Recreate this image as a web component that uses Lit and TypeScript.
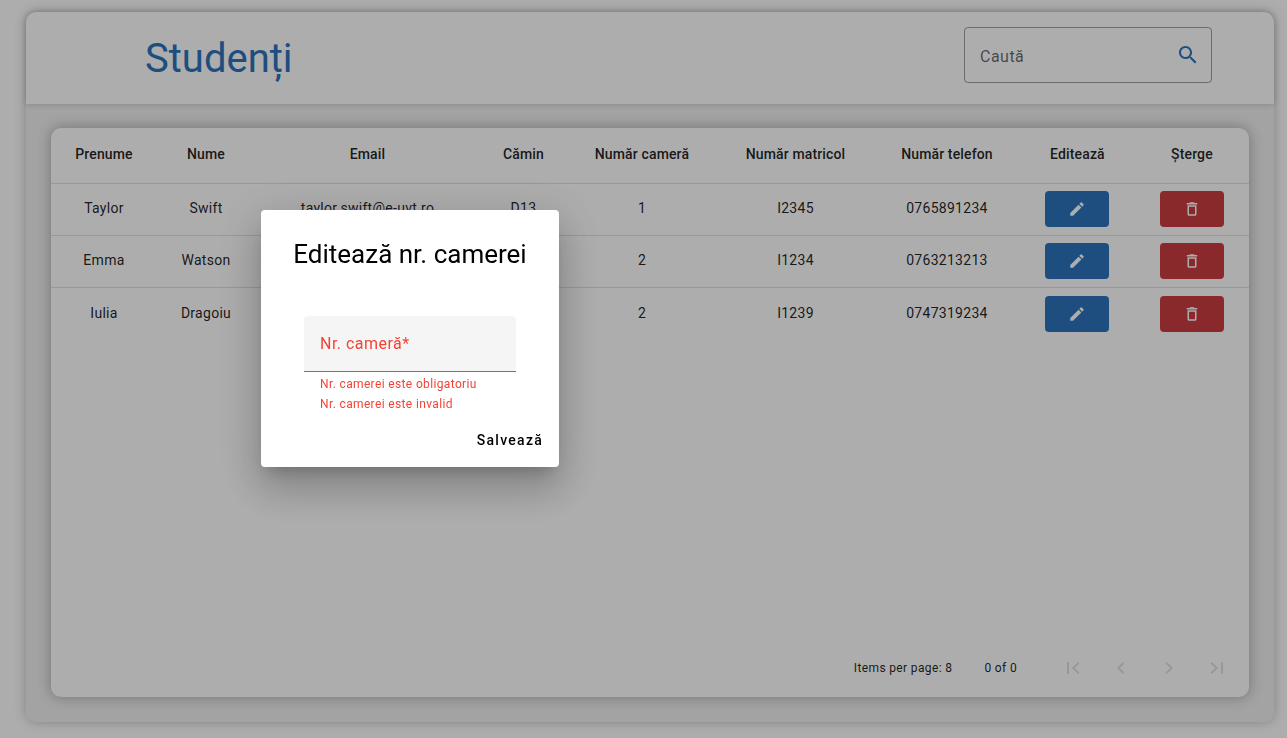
import { LitElement, html, css, svg } from "lit";
import { customElement, state } from "lit/decorators.js";

interface Student {
  firstName: string;
  lastName: string;
  email: string;
  dorm: string;
  room: string;
  matricol: string;
  phone: string;
}

const STUDENTS: Student[] = [
  { firstName: "Taylor", lastName: "Swift", email: "taylor.swift@e-uvt.ro", dorm: "D13", room: "1", matricol: "I2345", phone: "0765891234" },
  { firstName: "Emma", lastName: "Watson", email: "", dorm: "", room: "2", matricol: "I1234", phone: "0763213213" },
  { firstName: "Iulia", lastName: "Dragoiu", email: "", dorm: "", room: "2", matricol: "I1239", phone: "0747319234" },
];

// Column titles with their relative widths.
const COLUMNS: { title: string; weight: number }[] = [
  { title: "Prenume", weight: 106 },
  { title: "Nume", weight: 98 },
  { title: "Email", weight: 225 },
  { title: "Cămin", weight: 87 },
  { title: "Număr cameră", weight: 150 },
  { title: "Număr matricol", weight: 157 },
  { title: "Număr telefon", weight: 146 },
  { title: "Editează", weight: 115 },
  { title: "Șterge", weight: 114 },
];
const TOTAL_WEIGHT = COLUMNS.reduce((sum, c) => sum + c.weight, 0);

const ICONS = {
  search:
    "M15.5 14h-.79l-.28-.27C15.41 12.59 16 11.11 16 9.5 16 5.91 13.09 3 9.5 3S3 5.91 3 9.5 5.91 16 9.5 16c1.61 0 3.09-.59 4.23-1.57l.27.28v.79l5 4.99L20.49 19l-4.99-5zm-6 0C7.01 14 5 11.99 5 9.5S7.01 5 9.5 5 14 7.01 14 9.5 11.99 14 9.5 14z",
  edit:
    "M3 17.25V21h3.75L17.81 9.94l-3.75-3.75L3 17.25zM20.71 7.04c.39-.39.39-1.02 0-1.41l-2.34-2.34c-.39-.39-1.02-.39-1.41 0l-1.83 1.83 3.75 3.75 1.83-1.83z",
  trash:
    "M6 19c0 1.1.9 2 2 2h8c1.1 0 2-.9 2-2V7H6v12zM8 9h8v10H8V9zm7.5-5l-1-1h-5l-1 1H5v2h14V4z",
  first: "M18.41 16.59L13.82 12l4.59-4.59L17 6l-6 6 6 6zM6 6h2v12H6z",
  prev: "M15.41 7.41L14 6l-6 6 6 6 1.41-1.41L10.83 12z",
  next: "M10 6L8.59 7.41 13.17 12l-4.58 4.59L10 18l6-6z",
  last: "M5.59 7.41L10.18 12l-4.59 4.59L7 18l6-6-6-6zM16 6h2v12h-2z",
};

const icon = (name: keyof typeof ICONS, size: number) => html`
  <svg width=${size} height=${size} viewBox="0 0 24 24" fill="currentColor" aria-hidden="true">
    ${svg`<path d=${ICONS[name]}></path>`}
  </svg>
`;

@customElement("students-table")
class StudentsTable extends LitElement {
  static styles = css`
    :host {
      display: flex;
      flex-direction: column;
      justify-content: space-between;
      flex: 1;
      background: #fff;
      border-radius: 10px;
      box-shadow: 0 0 14px rgba(0, 0, 0, 0.3);
    }
    .table {
      width: 100%;
      table-layout: fixed;
      border-collapse: separate;
      border-spacing: 0;
      font-size: 14px;
      line-height: 20px;
      text-align: center;
      color: rgba(0, 0, 0, 0.87);
    }
    .head {
      height: 56px;
      padding: 0 0 4px;
      font-weight: 500;
      letter-spacing: 0.01em;
      border-bottom: 1px solid rgba(0, 0, 0, 0.12);
      box-sizing: border-box;
    }
    .cell {
      height: 52px;
      padding: 0 0 1px;
      box-sizing: border-box;
      letter-spacing: 0.02em;
      border-bottom: 1px solid rgba(0, 0, 0, 0.12);
    }
    .text {
      padding-bottom: 3px;
    }
    .row:last-child .cell {
      padding-top: 1px;
      border-bottom: none;
    }
    .action {
      display: inline-flex;
      align-items: center;
      justify-content: center;
      width: 64px;
      height: 36px;
      padding: 0;
      border: none;
      border-radius: 4px;
      color: #fff;
      vertical-align: middle;
      cursor: pointer;
    }
    .edit {
      background: #2d74bc;
    }
    .delete {
      background: #cc3d40;
    }
    .paginator {
      display: flex;
      align-items: center;
      justify-content: flex-end;
      height: 58px;
      padding: 0 8px;
      font-size: 12px;
      line-height: 20px;
      letter-spacing: 0.03em;
      color: rgba(0, 0, 0, 0.87);
    }
    .range {
      margin: 0 32px;
    }
    .page {
      display: flex;
      align-items: center;
      justify-content: center;
      width: 48px;
      height: 48px;
      padding: 0;
      border: none;
      background: transparent;
      color: rgba(0, 0, 0, 0.12);
    }
  `;

  render() {
    return html`
      <table class="table">
        <colgroup>
          ${COLUMNS.map((c) => html`<col style="width:${(c.weight / TOTAL_WEIGHT) * 100}%" />`)}
        </colgroup>
        <thead>
          <tr>
            ${COLUMNS.map((c) => html`<th class="head" scope="col">${c.title}</th>`)}
          </tr>
        </thead>
        <tbody>
          ${STUDENTS.map(
            (s) => html`
              <tr class="row">
                ${[s.firstName, s.lastName, s.email, s.dorm, s.room, s.matricol, s.phone].map(
                  (v) => html`<td class="cell text">${v}</td>`
                )}
                <td class="cell">
                  <button class="action edit" type="button" aria-label="Editează">${icon("edit", 18)}</button>
                </td>
                <td class="cell">
                  <button class="action delete" type="button" aria-label="Șterge">${icon("trash", 18)}</button>
                </td>
              </tr>
            `
          )}
        </tbody>
      </table>
      <div class="paginator">
        <span>Items per page: 8</span>
        <span class="range">0 of 0</span>
        <button class="page" type="button" disabled aria-label="First page">${icon("first", 24)}</button>
        <button class="page" type="button" disabled aria-label="Previous page">${icon("prev", 24)}</button>
        <button class="page" type="button" disabled aria-label="Next page">${icon("next", 24)}</button>
        <button class="page" type="button" disabled aria-label="Last page">${icon("last", 24)}</button>
      </div>
    `;
  }
}

@customElement("room-dialog")
class RoomDialog extends LitElement {
  static styles = css`
    .backdrop {
      position: fixed;
      inset: 0;
      background: rgba(0, 0, 0, 0.32);
    }
    .dialog {
      position: fixed;
      inset: 210px auto auto 261px;
      margin: 0;
      padding: 24px 8px 9px;
      width: 298px;
      box-sizing: border-box;
      border: none;
      border-radius: 4px;
      background: #fff;
      color: #000;
      box-shadow: 0 11px 15px -7px rgba(0, 0, 0, 0.2), 0 24px 38px 3px rgba(0, 0, 0, 0.14),
        0 9px 46px 8px rgba(0, 0, 0, 0.12);
    }
    .title {
      margin: 0 0 42px;
      font-size: 26px;
      line-height: 40px;
      font-weight: 400;
      text-align: center;
    }
    .form {
      display: flex;
      flex-direction: column;
    }
    .field {
      display: grid;
      margin: 0 35px;
      height: 56px;
      box-sizing: border-box;
      align-items: center;
      background: #f5f5f5;
      border-bottom: 1px solid #f44336;
      border-radius: 4px 4px 0 0;
    }
    .label,
    .input {
      grid-area: 1 / 1;
      padding: 0 16px;
      font: 400 16px/24px Roboto, sans-serif;
      letter-spacing: 0.03em;
    }
    .label {
      color: #f44336;
      pointer-events: none;
    }
    .input {
      width: 100%;
      height: 100%;
      box-sizing: border-box;
      border: none;
      outline: none;
      background: transparent;
    }
    .error {
      margin: 0 51px;
      font-size: 12px;
      line-height: 20px;
      letter-spacing: 0.03em;
      color: #f44336;
    }
    .errors {
      padding: 2px 0 8px;
    }
    .save {
      align-self: flex-end;
      height: 36px;
      padding: 0 8px;
      border: none;
      background: transparent;
      color: #000;
      font: 500 14px/36px Roboto, sans-serif;
      letter-spacing: 0.09em;
      cursor: pointer;
    }
  `;

  render() {
    return html`
      <div class="backdrop"></div>
      <dialog class="dialog" open aria-labelledby="title">
        <h2 class="title" id="title">Editează nr. camerei</h2>
        <form class="form" novalidate @submit=${(e: Event) => e.preventDefault()}>
          <div class="field">
            <input class="input" id="room" type="text" required aria-invalid="true" aria-describedby="errors" />
            <label class="label" for="room">Nr. cameră*</label>
          </div>
          <div class="errors" id="errors">
            <div class="error">Nr. camerei este obligatoriu</div>
            <div class="error">Nr. camerei este invalid</div>
          </div>
          <button class="save" type="submit">Salvează</button>
        </form>
      </dialog>
    `;
  }
}

@customElement("app-root")
class AppRoot extends LitElement {
  static styles = css`
    :host {
      display: flex;
      min-height: 100vh;
      box-sizing: border-box;
      padding: 12px 13px 16px 26px;
      background: #fff;
      font-family: Roboto, sans-serif;
    }
    .panel {
      display: flex;
      flex-direction: column;
      flex: 1;
      border-radius: 10px;
      background: #f0f0f0;
      box-shadow: 0 0 12px rgba(0, 0, 0, 0.25);
    }
    .header {
      display: flex;
      align-items: center;
      justify-content: space-between;
      height: 92px;
      box-sizing: border-box;
      padding: 2px 62px 0 119px;
      border-radius: 10px 10px 0 0;
      background: #fff;
      box-shadow: 0 0 6px rgba(0, 0, 0, 0.2);
    }
    .heading {
      margin: 0;
      font-size: 40px;
      line-height: 48px;
      font-weight: 400;
      color: #2d74bc;
    }
    .search {
      display: flex;
      align-items: center;
      width: 248px;
      height: 56px;
      box-sizing: border-box;
      margin-bottom: 8px;
      padding: 0 11px 0 15px;
      border: 1px solid rgba(0, 0, 0, 0.38);
      border-radius: 4px;
      color: #2d74bc;
    }
    .query {
      flex: 1;
      min-width: 0;
      height: 54px;
      padding: 2px 0 0;
      box-sizing: border-box;
      border: none;
      outline: none;
      background: transparent;
      font: 400 16px/24px Roboto, sans-serif;
      letter-spacing: 0.03em;
      color: rgba(0, 0, 0, 0.87);
    }
    .query::placeholder {
      color: rgba(0, 0, 0, 0.6);
      opacity: 1;
    }
    .body {
      display: flex;
      flex: 1;
      padding: 24px 25px 25px;
    }
  `;

  @state() private query = "";

  render() {
    return html`
      <main class="panel">
        <header class="header">
          <h1 class="heading">Studenți</h1>
          <label class="search">
            <input
              class="query"
              type="text"
              placeholder="Caută"
              aria-label="Caută"
              .value=${this.query}
              @input=${(e: Event) => (this.query = (e.target as HTMLInputElement).value)}
            />
            ${icon("search", 24)}
          </label>
        </header>
        <section class="body">
          <students-table></students-table>
        </section>
      </main>
      <room-dialog></room-dialog>
    `;
  }
}
